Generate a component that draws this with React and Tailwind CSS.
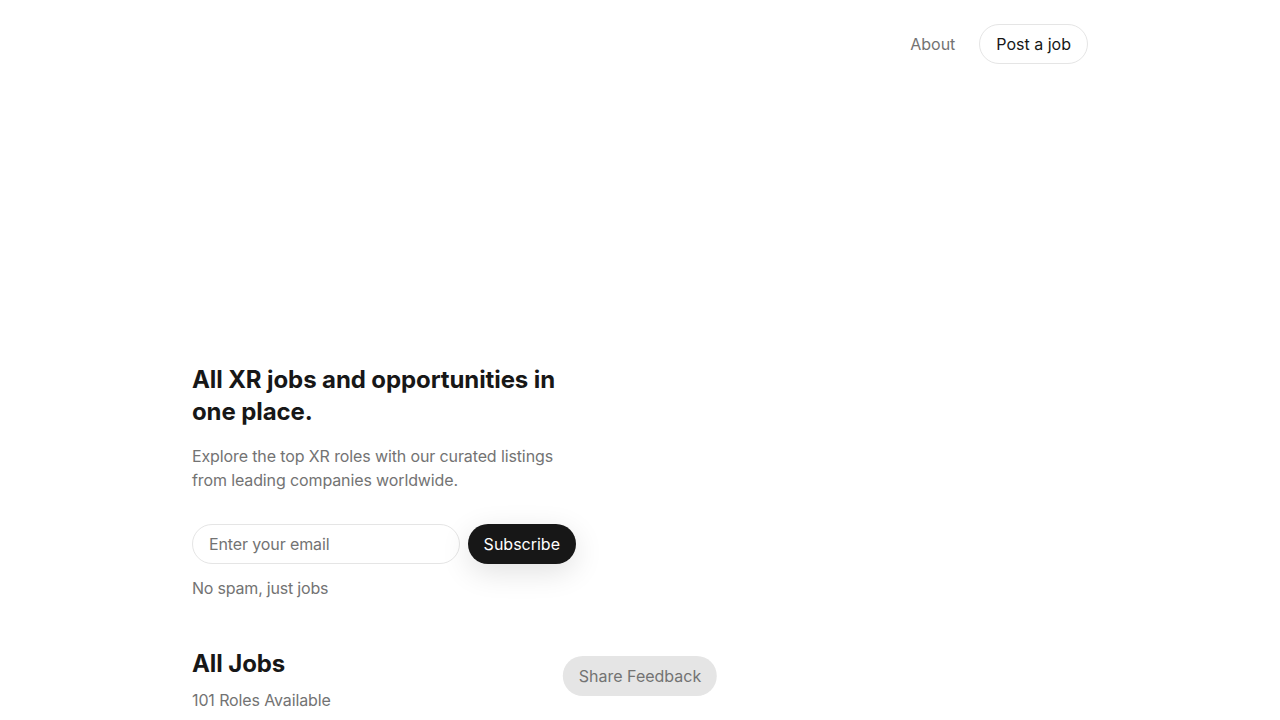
import React, { useState } from "react";

const font = { fontFamily: "Inter, 'Liberation Sans', sans-serif" };

const App = () => {
  const [email, setEmail] = useState("");

  return (
    <div className="min-h-screen bg-white text-[#171717] tracking-[-0.12px]" style={font}>
      <header className="max-w-4xl mx-auto pt-6 flex items-center justify-end gap-6 tracking-normal">
        <a href="#" className="text-base text-[#737373]">
          About
        </a>
        <a href="#" className="h-10 px-4 flex items-center rounded-full border border-[#e5e5e5] text-base text-[#171717]">
          Post a job
        </a>
      </header>

      <main className="max-w-4xl mx-auto">
        {/* hero canvas area (empty) */}
        <div className="h-[300px]" />

        <section className="max-w-sm">
          <h1 className="text-2xl leading-8 font-bold tracking-[-0.1px]">All XR jobs and opportunities in one place.</h1>
          <p className="mt-4 text-base leading-6 text-[#737373]">Explore the top XR roles with our curated listings from leading companies worldwide.</p>

          <form className="mt-8 flex gap-2" onSubmit={(e) => e.preventDefault()}>
            <input
              type="email"
              value={email}
              onChange={(e) => setEmail(e.target.value)}
              placeholder="Enter your email"
              className="h-10 flex-1 min-w-0 rounded-full border border-[#e5e5e5] px-4 text-base placeholder:text-[#737373] focus:outline-none"
            />
            <button type="submit" className="h-10 px-4 rounded-full bg-[#171717] text-white text-base tracking-normal shadow-[0_8px_30px_rgba(0,0,0,0.12)]">
              Subscribe
            </button>
          </form>
          <p className="mt-3 text-base leading-6 text-[#737373] tracking-[-0.2px]">No spam, just jobs</p>
        </section>

        <section className="mt-12">
          <h2 className="text-2xl leading-8 font-bold tracking-[-0.1px]">All Jobs</h2>
          <p className="mt-2 text-base leading-6 text-[#737373]">101 Roles Available</p>
        </section>
      </main>

      <button className="fixed bottom-6 left-1/2 -translate-x-1/2 h-10 px-4 rounded-full bg-[#e5e5e5] text-base text-[#737373] tracking-normal">
        Share Feedback
      </button>
    </div>
  );
};

export default App;
